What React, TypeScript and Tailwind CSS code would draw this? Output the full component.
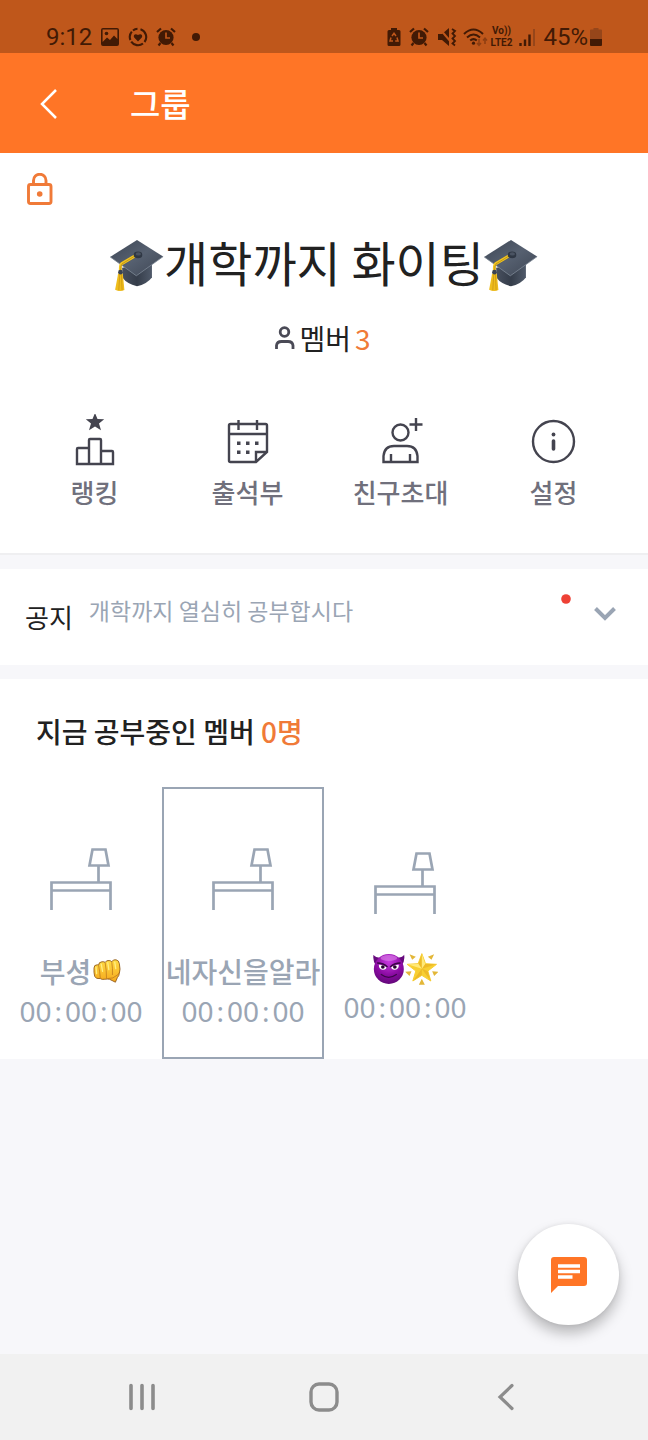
import type { ReactNode } from "react";

function GraduationCap({ id }: { id: string }) {
  return (
    <svg role="img" aria-label="졸업 모자" viewBox="62 58 162 160" className="mt-2 h-[53px] w-[54px] shrink-0">
      <defs>
        <linearGradient id={`${id}-board`} x1="0" y1="0" x2="1" y2="1">
          <stop offset="0" stopColor="#3d4654" />
          <stop offset="0.5" stopColor="#566070" />
          <stop offset="1" stopColor="#3e4654" />
        </linearGradient>
        <linearGradient id={`${id}-base`} x1="0" y1="0" x2="1" y2="0">
          <stop offset="0" stopColor="#48505f" />
          <stop offset="0.5" stopColor="#353d4a" />
          <stop offset="1" stopColor="#505a6a" />
        </linearGradient>
      </defs>
      <path d="M98 145L100 176Q112 193 143 201Q174 193 188 174L188 128Z" fill={`url(#${id}-base)`} />
      <path d="M62 112L143 61L222 111L141 169Z" fill={`url(#${id}-board)`} />
      <path d="M62 112L141 169L222 111" fill="none" stroke="#7d8795" strokeWidth="2.5" />
      <path d="M142 106L96 133Q92 136 93 155" fill="none" stroke="#f4c51c" strokeWidth="9" />
      <path d="M142 106L98 133Q93 137 94 155" fill="none" stroke="#8a6a1c" strokeWidth="1.5" />
      <ellipse cx="146" cy="106" rx="13" ry="10" fill="#2f3744" />
      <ellipse cx="147" cy="103" rx="8" ry="5" fill="#4a5362" />
      <path d="M86 162L100 162L105 212Q91 218 77 211Z" fill="#efbd1b" />
      <path d="M91 164L88 213M96 164L98 213" stroke="#c48f10" strokeWidth="2" />
      <ellipse cx="93" cy="158" rx="7" ry="7" fill="#3b4351" />
    </svg>
  );
}

function FistEmoji() {
  return (
    <svg role="img" aria-label="주먹" viewBox="276 538 88 78" className="ml-0.5 h-[26px] w-[29px] shrink-0">
      <defs>
        <linearGradient id="fist" x1="0" y1="0" x2="0" y2="1">
          <stop offset="0" stopColor="#ffdc45" />
          <stop offset="1" stopColor="#f5a81c" />
        </linearGradient>
      </defs>
      <path
        d="M279 568Q279 558 289 558L293 559Q293 550 303 549Q310 548 313 551Q316 544 325 545Q331 546 333 549Q337 541 346 543Q355 545 356 555Q360 573 356 584Q355 592 350 597L344 611L326 602Q320 601 312 602Q303 604 298 600Q284 602 281 593Q278 581 279 568Z"
        fill="url(#fist)"
        stroke="#8a5214"
        strokeWidth="2.5"
      />
      <path
        d="M293 560Q297 580 298 599M313 552Q317 575 317 600M333 550Q336 570 335 589M320 600Q336 602 352 588L355 582"
        fill="none"
        stroke="#b9731c"
        strokeWidth="2.2"
      />
      <path d="M285 565L287 585M301 556L305 578M321 552L324 573M342 550L345 570" stroke="#ffee84" strokeWidth="4" strokeLinecap="round" />
    </svg>
  );
}

function DevilEmoji() {
  return (
    <svg role="img" aria-label="웃는 악마" viewBox="154 373 98 96" className="h-8 w-[33px] shrink-0">
      <defs>
        <radialGradient id="devil" cx="0.5" cy="0.25" r="0.8">
          <stop offset="0" stopColor="#c83be0" />
          <stop offset="0.55" stopColor="#8c0ca4" />
          <stop offset="1" stopColor="#5c0672" />
        </radialGradient>
      </defs>
      <path d="M158 378Q163 387 181 387L166 411Q155 398 158 378ZM250 378Q245 387 227 387L242 411Q253 398 250 378Z" fill="#670a7d" />
      <circle cx="204" cy="421" r="45" fill="url(#devil)" />
      <ellipse cx="204" cy="388" rx="25" ry="9" fill="#dc83e8" opacity="0.6" />
      <path d="M174 408Q185 407 197 415Q196 424 185 423Q174 422 174 408ZM234 408Q223 407 211 415Q212 424 223 423Q234 422 234 408Z" fill="#fff" />
      <circle cx="186" cy="415" r="5.500" fill="#26032e" />
      <circle cx="222" cy="415" r="5.500" fill="#26032e" />
      <path d="M169 403Q188 403 200 415M239 403Q220 403 208 415" fill="none" stroke="#3a0546" strokeWidth="4" />
      <path d="M180 437Q203 455 228 437" fill="none" stroke="#3d064a" strokeWidth="3.5" />
    </svg>
  );
}

function StarEmoji() {
  return (
    <svg role="img" aria-label="빛나는 별" viewBox="252 373 98 96" className="h-8 w-[33px] shrink-0">
      <path
        d="M302 375L313 405L346 407L320 427L329 457L302 440L275 457L284 427L258 407L291 405Z"
        fill="#f8cf32"
        stroke="#f8cf32"
        strokeWidth="3"
        strokeLinejoin="round"
      />
      <path d="M302 375V420L292 406ZM345 407L302 420L312 406ZM328 456L302 420L319 427ZM276 456L302 420L302 439Z" fill="#e3a51b" opacity="0.5" />
      <path d="M302 375L312 406L302 420ZM259 407L292 406L302 420Z" fill="#ffe97a" />
      <path d="M265 377L284 384L273 393ZM339 377L320 384L331 393ZM252 429L271 428L265 442ZM352 429L333 428L339 442ZM302 450L311 468L293 468Z" fill="#e3b738" />
    </svg>
  );
}

function AlarmIcon() {
  return (
    <svg viewBox="0 0 20 20" className="size-5" aria-hidden="true">
      <circle cx="10" cy="10.5" r="7.6" fill="currentColor" />
      <path d="M1 5L5 1.5M19 5L15 1.5M4.5 16L2.5 18.5M15.5 16L17.5 18.5" stroke="currentColor" strokeWidth="2.2" />
      <path d="M10 5.5V11H14" stroke="#bf571b" strokeWidth="1.7" fill="none" />
    </svg>
  );
}

function StatusBar() {
  return (
    <div className="flex h-[53px] items-center justify-between bg-[#bf571b] px-[46px] pt-5 font-[Roboto,sans-serif] text-2xl leading-6 text-[#421a05]">
      <div className="flex items-center gap-2">
        <span>9:12</span>
        <svg viewBox="0 0 20 20" className="size-5" aria-hidden="true">
          <path fillRule="evenodd" d="M3 1H17Q19 1 19 3V17Q19 19 17 19H3Q1 19 1 17V3Q1 1 3 1ZM2.6 2.6V15L7 10.5L10 13L14 8.5L17.4 12V2.6Z" fill="currentColor" />
          <circle cx="6.5" cy="6.5" r="1.8" fill="currentColor" />
        </svg>
        <svg viewBox="0 0 20 20" className="size-5" aria-hidden="true">
          <path d="M12.5 2.2A8.2 8.2 0 0 1 16.5 15M15 16.5A8.2 8.2 0 0 1 3.2 14.6M2.4 13A8.2 8.2 0 0 1 3.8 4.6M5 3.5A8.2 8.2 0 0 1 9.5 1.8" fill="none" stroke="currentColor" strokeWidth="2.100" />
          <path d="M10 14.5L6.2 10.5C4.8 8.5 7 5.8 10 8C13 5.8 15.2 8.5 13.8 10.5Z" fill="currentColor" />
        </svg>
        <AlarmIcon />
        <svg viewBox="0 0 8 8" className="ml-2 size-2" aria-hidden="true">
          <circle cx="4" cy="4" r="4" fill="currentColor" />
        </svg>
      </div>
      <div className="flex items-center gap-2">
        <svg viewBox="0 0 14 20" className="h-5 w-3.5" aria-hidden="true">
          <path d="M4 1H10V3H12Q13.5 3 13.5 4.5V17.5Q13.5 19 12 19H2Q.5 19 .5 17.5V4.5Q.5 3 2 3H4Z" fill="currentColor" />
          <path d="M5 9L7 6.2L9 9M10 10.5L11 14H8.2M4 10.5L3 14H6" fill="none" stroke="#bf571b" strokeWidth="1.5" />
        </svg>
        <AlarmIcon />
        <svg viewBox="0 0 20 20" className="size-5" aria-hidden="true">
          <path d="M1 7H5L12 1V19L5 13H1Z" fill="currentColor" />
          <path d="M2 1L14 15" stroke="#bf571b" strokeWidth="2" />
          <path d="M15 2L18 4L15.5 6.5L18 9L15.5 11.5L18 14L15.5 16.5L18 18.5" fill="none" stroke="currentColor" strokeWidth="1.8" />
        </svg>
        <svg viewBox="0 0 26 20" className="-ml-0.5 h-5 w-[26px]" aria-hidden="true">
          <path d="M1 7Q10.500 -2 20 7M4 10.500Q10.500 4.500 17 10.500M7.200 13.600Q10.500 10.600 13.800 13.600" fill="none" stroke="currentColor" strokeWidth="2" />
          <circle cx="10.500" cy="16.200" r="1.600" fill="currentColor" />
          <path d="M16 12V18M14 16L16 18.300L18 16M22 17V11.500M20 13.500L22 11.200L24 13.500" fill="none" stroke="#8d3e12" strokeWidth="1.500" />
        </svg>
        <div className="-ml-1.5 flex flex-col items-center text-[10px] leading-3 font-bold">
          <span>Vo))</span>
          <span>LTE2</span>
        </div>
        <svg viewBox="0 0 16 20" className="-ml-px h-5 w-4" aria-hidden="true">
          <path d="M1.500 16V19M6 12.500V19M10.500 7.500V19" stroke="currentColor" strokeWidth="2.400" />
          <path d="M15 2V19" stroke="#96461a" strokeWidth="2" />
        </svg>
        <span>45%</span>
        <svg viewBox="0 0 12 20" className="-ml-1.5 h-5 w-3" aria-hidden="true">
          <path d="M3.500 1H8.500V2.500H11Q12 2.500 12 3.500V12H0V3.500Q0 2.500 1 2.500H3.500Z" fill="#96461a" />
          <path d="M0 12H12V18Q12 19 11 19H1Q0 19 0 18Z" fill="currentColor" />
        </svg>
      </div>
    </div>
  );
}

const line = { fill: "none", stroke: "#44444f", strokeWidth: 2.4 };

const actions: { label: string; icon: ReactNode }[] = [
  {
    label: "랭킹",
    icon: (
      <svg viewBox="0 0 52 52" className="size-13" aria-hidden="true">
        <path d="M26 -1L28.500 5L35.200 5.300L30 9.500L32 16.300L26 12.600L20 16.300L22 9.500L16.800 5.300L23.500 5Z" fill="#44444f" />
        <path d="M20 34H9Q8 34 8 35V50H44V38Q44 37 43 37H32M20 50V26Q20 25 21 25H31Q32 25 32 26V50" {...line} />
      </svg>
    ),
  },
  {
    label: "출석부",
    icon: (
      <svg viewBox="0 0 52 52" className="size-13" aria-hidden="true">
        <path d="M34 48H8.500Q7 48 7 46.500V11.500Q7 10 8.500 10H43.500Q45 10 45 11.500V38ZM7 20H45M16.500 6V16M35 6V16M34 48V38H45" {...line} />
        <path d="M15 27.500H18.500V31H15ZM24 27.500H27.500V31H24ZM33 27.500H36.500V31H33ZM15 36.500H18.500V40H15ZM24 36.500H27.500V40H24Z" fill="#44444f" />
      </svg>
    ),
  },
  {
    label: "친구초대",
    icon: (
      <svg viewBox="1 0 52 52" className="size-13" aria-hidden="true">
        <circle cx="26.500" cy="18.500" r="8" {...line} />
        <path d="M9.500 48V42Q10.500 32 20 32H33Q42.500 32 43.500 42V48ZM17 40V48M36 40V48M42 4V17M35.500 10.500H48.500" {...line} />
      </svg>
    ),
  },
  {
    label: "설정",
    icon: (
      <svg viewBox="1 0 52 52" className="size-13" aria-hidden="true">
        <circle cx="26.500" cy="27.500" r="20.500" {...line} />
        <circle cx="26.500" cy="20.500" r="1.900" fill="#44444f" />
        <path d="M26.500 27V35" stroke="#44444f" strokeWidth="3.600" strokeLinecap="round" />
      </svg>
    ),
  },
];

function Desk() {
  return (
    <svg viewBox="0 0 64 64" className="mt-[30px] mb-[38px] size-16 shrink-0" aria-hidden="true">
      <path
        d="M2.500 63V35.500H61.500V63M2.500 43.500H61.500M49.500 35V19M43.500 2.500H56.500L59.500 18.500H40.500Z"
        fill="none"
        stroke="#9aa5b4"
        strokeWidth="2.700"
      />
    </svg>
  );
}

function Member({ name, selected = false }: { name: ReactNode; selected?: boolean }) {
  return (
    <li>
      <button
        type="button"
        className={
          selected
            ? "flex h-[272px] w-full flex-col items-center justify-center border-2 border-[#9aa5b4]"
            : "flex h-[272px] w-full flex-col items-center justify-center border-2 border-transparent"
        }
      >
        <Desk />
        {name}
        <span className="font-['Noto_Sans',sans-serif] text-[28px] leading-9">
          00<span className="px-[3px]">:</span>00<span className="px-[3px]">:</span>00
        </span>
      </button>
    </li>
  );
}

const nameStyle = "flex h-11 items-center text-[28px] font-medium whitespace-nowrap";

export default function App() {
  return (
    <div className="flex min-h-screen flex-col bg-[#f7f7fa] font-['Noto_Sans_CJK_KR',sans-serif] text-[#212121]">
      <StatusBar />
      <header className="flex h-[100px] items-center bg-[#ff7526] text-white">
        <button type="button" aria-label="뒤로" className="ml-8 flex size-8 items-center justify-center">
          <svg viewBox="0 0 32 32" className="size-8" aria-hidden="true">
            <path d="M24 3L10 17L24 31" fill="none" stroke="currentColor" strokeWidth="2.500" />
          </svg>
        </button>
        <h1 className="ml-[66px] text-[33px] leading-10 font-medium">그룹</h1>
      </header>

      <main className="relative flex-1">
        <section className="border-b-2 border-[#efeff1] bg-white pt-5 pb-[43px]">
          <svg viewBox="0 0 26 32" className="ml-[27px] h-8 w-[26px]" role="img" aria-label="비공개 그룹">
            <rect x="1.500" y="11.500" width="22.500" height="19" rx="2" fill="none" stroke="#f07a38" strokeWidth="2.900" />
            <path d="M6.500 11V7.500A6.200 6.200 0 0 1 19 7.500V11" fill="none" stroke="#f07a38" strokeWidth="2.900" />
            <circle cx="12.700" cy="21" r="2.800" fill="#f07a38" />
          </svg>
          <h2 className="mt-6 flex items-center justify-center text-5xl leading-16 whitespace-nowrap">
            <GraduationCap id="cap-left" />
            개학까지 화이팅
            <GraduationCap id="cap-right" />
          </h2>
          <p className="mt-[25px] flex items-center justify-center pr-1 text-[28px] leading-10">
            <svg viewBox="0 0 24 26" className="h-[26px] w-6" aria-hidden="true">
              <circle cx="11.500" cy="7" r="4.300" fill="none" stroke="#4a4a56" strokeWidth="2.800" />
              <path d="M3.500 24V20.500Q4 16.500 8.500 16.500H15Q19.500 16.500 20 20.500V24" fill="none" stroke="#4a4a56" strokeWidth="2.800" />
            </svg>
            <span className="ml-0.5">멤버</span>
            <span className="ml-1 text-[#f07a38]">3</span>
          </p>
          <nav className="mt-14 grid grid-cols-4 px-[18px]">
            {actions.map(({ label, icon }) => (
              <button key={label} type="button" className="flex flex-col items-center gap-2 text-[26px] leading-9 font-medium text-[#70707c]">
                {icon}
                {label}
              </button>
            ))}
          </nav>
        </section>

        <section className="mt-3.5 flex h-24 items-start bg-white pl-[25px]">
          <h2 className="mt-7 text-[26px] leading-10">공지</h2>
          <p className="mt-[21px] ml-4 flex-1 text-[23px] leading-10 text-[#9aa5b4]">개학까지 열심히 공부합시다</p>
          <svg viewBox="0 0 10 10" className="mt-[25px] size-2.5" role="img" aria-label="새 공지">
            <circle cx="5" cy="5" r="4.800" fill="#ee4135" />
          </svg>
          <button type="button" aria-label="공지 펼치기" className="mt-7 mr-[27px] ml-[18px] flex size-8 items-center justify-center">
            <svg viewBox="0 0 24 24" className="size-6" aria-hidden="true">
              <path d="M2.500 7.500L12 17L21.500 7.500" fill="none" stroke="#9aa5b4" strokeWidth="4" />
            </svg>
          </button>
        </section>

        <section className="mt-3.5 bg-white pt-8">
          <h2 className="pl-9 text-[28px] leading-10 font-medium">
            지금 공부중인 멤버 <span className="text-[#f07a38]">0명</span>
          </h2>
          <ul className="mt-9 grid grid-cols-4 text-[#9aa5b4]">
            <Member
              name={
                <span className={nameStyle}>
                  부셩
                  <FistEmoji />
                </span>
              }
            />
            <Member selected name={<span className={nameStyle}>네자신을알라</span>} />
            <Member
              name={
                <span className="flex h-9 items-start">
                  <DevilEmoji />
                  <StarEmoji />
                </span>
              }
            />
          </ul>
        </section>

        <button
          type="button"
          aria-label="채팅"
          className="absolute right-[29px] bottom-[29px] flex size-[101px] items-center justify-center rounded-full bg-white shadow-[0_8px_14px_rgba(0,0,0,0.26),0_0_4px_rgba(0,0,0,0.08)]"
        >
          <svg viewBox="0 0 36 36" className="size-9" aria-hidden="true">
            <path d="M3 0H33Q36 0 36 3V26Q36 29 33 29H7L0 36V3Q0 0 3 0Z" fill="#ff7526" />
            <path d="M7 9H29M7 14.500H29M7 20H21.500" stroke="#fff" strokeWidth="3.400" />
          </svg>
        </button>
      </main>

      <footer className="flex h-[86px] items-center justify-between bg-[#f1f1f1] px-[126px] text-[#8c8c8c]">
        <button type="button" aria-label="최근 앱">
          <svg viewBox="0 0 32 32" className="size-8" aria-hidden="true">
            <path d="M5 4.500V27.500M16 4.500V27.500M27 4.500V27.500" stroke="currentColor" strokeWidth="3.600" strokeLinecap="round" />
          </svg>
        </button>
        <button type="button" aria-label="홈">
          <svg viewBox="0 0 32 32" className="size-8" aria-hidden="true">
            <rect x="3" y="3" width="26" height="26" rx="8" fill="none" stroke="currentColor" strokeWidth="3.400" />
          </svg>
        </button>
        <button type="button" aria-label="뒤로 가기">
          <svg viewBox="0 0 32 32" className="size-8" aria-hidden="true">
            <path d="M22 4.500L10 16L22 27.500" fill="none" stroke="currentColor" strokeWidth="3.200" strokeLinecap="round" />
          </svg>
        </button>
      </footer>
    </div>
  );
}
